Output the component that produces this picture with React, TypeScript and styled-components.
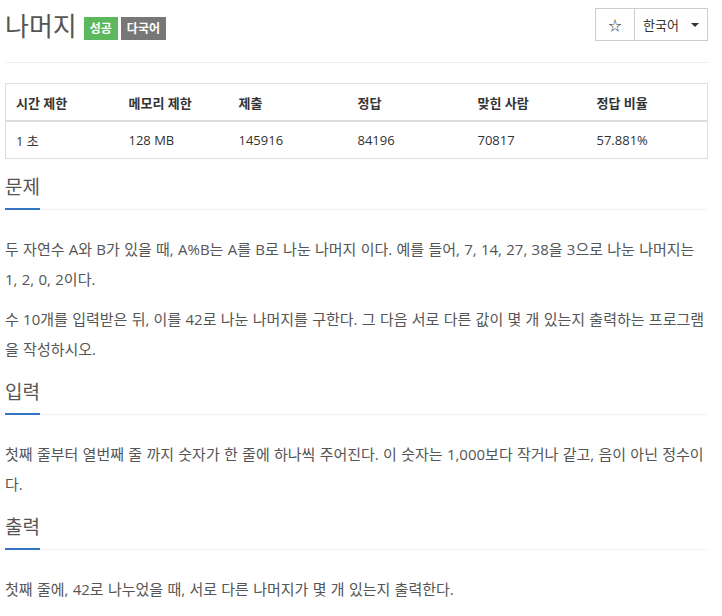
import styled, { createGlobalStyle } from 'styled-components'

const GlobalStyle = createGlobalStyle`
  body {
    margin: 0;
    background: #fff;
    font-family: "Open Sans", "Noto Sans CJK KR", sans-serif;
    color: #555;
  }
`

const Page = styled.div`
  padding: 0 14px 0 5px;
`

const TitleBar = styled.div`
  display: flex;
  align-items: flex-start;
  justify-content: space-between;
  height: 62px;
  border-bottom: 1px solid #eee;
`

const TitleGroup = styled.div`
  display: flex;
  align-items: center;
  gap: 3px;
  padding-top: 8px;
`

const Title = styled.h1`
  margin: 0 4px 0 0;
  font-size: 26px;
  font-weight: 400;
  line-height: 36px;
  color: #555;
`

const Badge = styled.span<{ $bg: string }>`
  display: inline-flex;
  align-items: center;
  height: 23px;
  padding: 0 6px;
  margin-top: 4px;
  background: ${(p) => p.$bg};
  color: #fff;
  font-size: 12px;
  font-weight: 700;
`

const ButtonGroup = styled.div`
  display: flex;
  margin-top: 8px;
`

const GroupButton = styled.button<{ $w: number; $first?: boolean }>`
  display: flex;
  align-items: center;
  justify-content: center;
  gap: 12px;
  box-sizing: border-box;
  width: ${(p) => p.$w}px;
  height: 33px;
  padding: 0;
  margin-left: ${(p) => (p.$first ? '0' : '-1px')};
  border: 1px solid #ccc;
  background: #fff;
  color: #333;
  font-family: inherit;
  font-size: 13px;
`

const Caret = styled.span`
  width: 0;
  height: 0;
  border-left: 4px solid transparent;
  border-right: 4px solid transparent;
  border-top: 4px solid #333;
`

const InfoTable = styled.table`
  width: 100%;
  margin: 20px 0 2px;
  table-layout: fixed;
  border-collapse: collapse;
  border: 1px solid #ddd;
  font-size: 13px;
  color: #333;
`

const Th = styled.th<{ $w?: number }>`
  box-sizing: border-box;
  width: ${(p) => (p.$w ? `${p.$w}px` : 'auto')};
  height: 37px;
  padding: 2px 10px 0;
  text-align: left;
  font-weight: 700;
  border-bottom: 2px solid #ddd;
`

const Td = styled.td`
  height: 35px;
  padding: 1px 10px 0;
`

const Section = styled.section`
  margin-top: 12px;
`

const Headline = styled.div`
  border-bottom: 1px dotted #e5e5e5;
  margin-bottom: 24px;
`

const H2 = styled.h2`
  display: inline-block;
  margin: 0 0 -1px 0;
  padding-bottom: 5px;
  border-bottom: 2px solid #3273c3;
  font-size: 19px;
  font-weight: 400;
  line-height: 32px;
  color: #555;
`

const Text = styled.p`
  margin: 0 0 10px;
  font-size: 15px;
  word-spacing: 0.4px;
  line-height: 30px;
  color: #555;
`

const columns = [
  { label: '시간 제한', value: '1 초', w: 113 },
  { label: '메모리 제한', value: '128 MB', w: 110 },
  { label: '제출', value: '145916', w: 119 },
  { label: '정답', value: '84196', w: 120 },
  { label: '맞힌 사람', value: '70817', w: 119 },
  { label: '정답 비율', value: '57.881%' },
]

const sections = [
  {
    title: '문제',
    body: [
      '두 자연수 A와 B가 있을 때, A%B는 A를 B로 나눈 나머지 이다. 예를 들어, 7, 14, 27, 38을 3으로 나눈 나머지는 1, 2, 0, 2이다.',
      '수 10개를 입력받은 뒤, 이를 42로 나눈 나머지를 구한다. 그 다음 서로 다른 값이 몇 개 있는지 출력하는 프로그램을 작성하시오.',
    ],
  },
  {
    title: '입력',
    body: ['첫째 줄부터 열번째 줄 까지 숫자가 한 줄에 하나씩 주어진다. 이 숫자는 1,000보다 작거나 같고, 음이 아닌 정수이다.'],
  },
  {
    title: '출력',
    body: ['첫째 줄에, 42로 나누었을 때, 서로 다른 나머지가 몇 개 있는지 출력한다.'],
  },
]

export default function App() {
  return (
    <Page>
      <GlobalStyle />
      <TitleBar>
        <TitleGroup>
          <Title>나머지</Title>
          <Badge $bg="#5cb85c">성공</Badge>
          <Badge $bg="#777">다국어</Badge>
        </TitleGroup>
        <ButtonGroup>
          <GroupButton $w={40} $first>
            ☆
          </GroupButton>
          <GroupButton $w={74}>
            한국어 <Caret />
          </GroupButton>
        </ButtonGroup>
      </TitleBar>

      <InfoTable>
        <thead>
          <tr>
            {columns.map((c) => (
              <Th key={c.label} $w={c.w}>
                {c.label}
              </Th>
            ))}
          </tr>
        </thead>
        <tbody>
          <tr>
            {columns.map((c) => (
              <Td key={c.label}>{c.value}</Td>
            ))}
          </tr>
        </tbody>
      </InfoTable>

      {sections.map((s) => (
        <Section key={s.title}>
          <Headline>
            <H2>{s.title}</H2>
          </Headline>
          {s.body.map((t) => (
            <Text key={t}>{t}</Text>
          ))}
        </Section>
      ))}
    </Page>
  )
}
